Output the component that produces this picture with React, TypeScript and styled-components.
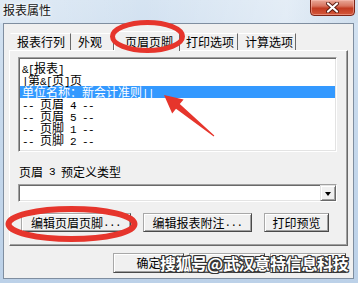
import React from "react";
import styled, { createGlobalStyle } from "styled-components";

const CJK = `"Noto Sans CJK SC", "Noto Sans CJK JP", sans-serif`;

const GlobalStyle = createGlobalStyle`
  html, body { margin: 0; padding: 0; background: #c8d9ec; }
  body { font-family: ${CJK}; }
`;

const Window = styled.div`
  position: relative;
  width: 358px;
  height: 283px;
  box-sizing: border-box;
  display: flex;
  flex-direction: column;
  padding: 0 4px 4px 3px;
  background: linear-gradient(180deg, #d6e4f2 0%, #c8daed 35%, #bcd1e8 100%);
  overflow: hidden;
  font-family: ${CJK};
  color: #000;
`;

const TitleBar = styled.div`
  height: 23px;
  flex-shrink: 0;
  display: flex;
  align-items: flex-start;
  background: linear-gradient(90deg, rgba(255,255,255,0.25), rgba(255,255,255,0) 40%, rgba(255,255,255,0.35) 80%, rgba(200,215,230,0.3));
  margin: 0 -4px 0 -3px;
  padding: 0 4px 0 3px;
`;

const Title = styled.div`
  font-size: 12px;
  line-height: 14px;
  margin-top: 3px;
  color: #151515;
  text-shadow: 0 0 5px #fff, 0 0 3px #fff;
`;

const CloseButton = styled.div`
  margin-left: auto;
  margin-top: -1px;
  margin-right: -1px;
  width: 45px;
  height: 17px;
  box-sizing: border-box;
  border: 1px solid #7d2416;
  border-radius: 0 0 4px 4px;
  background: linear-gradient(180deg, #e9a898 0%, #d8745f 40%, #c23b22 55%, #d4583b 100%);
  box-shadow: inset 0 0 0 1px rgba(255, 200, 190, 0.45);
  display: flex;
  align-items: center;
  justify-content: center;
`;

const Client = styled.div`
  flex: 1;
  display: flex;
  flex-direction: column;
  background: #f0f0f0;
  border: 1px solid #7f8ea0;
  padding: 7px 5px 5px 5px;
`;

const TabStrip = styled.div`
  height: 19px;
  display: flex;
  align-items: flex-end;
  padding-left: 1px;
  position: relative;
  z-index: 1;
`;

const Tab = styled.div<{ $w: number; $pl: number; $active?: boolean }>`
  width: ${(p) => p.$w}px;
  box-sizing: border-box;
  height: ${(p) => (p.$active ? 20 : 17)}px;
  margin-bottom: ${(p) => (p.$active ? -1 : 0)}px;
  padding-left: ${(p) => p.$pl}px;
  padding-bottom: ${(p) => (p.$active ? 2 : 1)}px;
  display: flex;
  align-items: flex-end;
  background: #f0f0f0;
  border-top: 1px solid #ffffff;
  border-left: 1px solid ${(p) => (p.$active ? "#ffffff" : "transparent")};
  border-right: 1px solid #696969;
  font-size: 12px;
  line-height: 14px;
  white-space: nowrap;
`;

const TabPanel = styled.div`
  height: 196px;
  box-sizing: border-box;
  border: 1px solid;
  border-color: #ffffff #696969 #696969 #ffffff;
  box-shadow: inset -1px -1px #a0a0a0;
  padding: 6px 10px 13px 8px;
  display: flex;
  flex-direction: column;
`;

const ListBox = styled.div`
  height: 95px;
  box-sizing: border-box;
  background: #ffffff;
  border: 1px solid;
  border-color: #a0a0a0 #ffffff #ffffff #a0a0a0;
  box-shadow: inset 1px 1px #696969, inset -1px -1px #e3e3e3;
  padding: 4px 1px 0 1px;
  overflow: hidden;
`;

const ListRow = styled.div<{ $selected?: boolean }>`
  height: 12px;
  line-height: 12px;
  display: flex;
  align-items: baseline;
  padding-left: 2px;
  background: ${(p) => (p.$selected ? "#3399ff" : "transparent")};
  color: ${(p) => (p.$selected ? "#ffffff" : "#000000")};
`;

const Narrow = styled.span`
  display: inline-block;
  height: 12px;
  line-height: 12px;
  font-family: "Liberation Mono", "DejaVu Sans Mono", monospace;
  font-size: 11px;
  letter-spacing: -0.6px;
  white-space: pre;
`;

const Wide = styled.span`
  display: inline-block;
  height: 12px;
  line-height: 12px;
  font-family: ${CJK};
  font-size: 12px;
  white-space: pre;
`;

const FieldLabel = styled.div`
  margin-top: 13px;
  height: 14px;
  line-height: 14px;
  padding-left: 1px;
  display: flex;
  align-items: center;
`;

const Combo = styled.div`
  margin-top: 5px;
  height: 18px;
  box-sizing: border-box;
  background: #ffffff;
  border: 1px solid;
  border-color: #a0a0a0 #ffffff #ffffff #a0a0a0;
  box-shadow: inset 1px 1px #696969, inset -1px -1px #e3e3e3;
  display: flex;
  justify-content: flex-end;
`;

const DropButton = styled.div`
  width: 16px;
  height: 16px;
  box-sizing: border-box;
  background: #f0f0f0;
  border: 1px solid;
  border-color: #e3e3e3 #696969 #696969 #e3e3e3;
  box-shadow: inset 1px 1px #ffffff, inset -1px -1px #a0a0a0;
  display: flex;
  align-items: center;
  justify-content: center;
`;

const Arrow = styled.div`
  width: 0;
  height: 0;
  border-left: 3.5px solid transparent;
  border-right: 3.5px solid transparent;
  border-top: 4px solid #000;
  margin-top: 1px;
`;

const ButtonRow = styled.div`
  margin-top: 11px;
  display: flex;
  gap: 12px;
  padding-left: 3px;
`;

const Button = styled.div<{ $w: number; $h?: number }>`
  width: ${(p) => p.$w}px;
  height: ${(p) => p.$h ?? 19}px;
  box-sizing: border-box;
  background: #f0f0f0;
  border: 1px solid;
  border-color: #a8a8a8 #4a4a4a #4a4a4a #a8a8a8;
  box-shadow: inset 1px 1px #ffffff, inset -1px -1px #a0a0a0;
  display: flex;
  align-items: center;
  justify-content: center;
  font-size: 12px;
  line-height: 14px;
  white-space: nowrap;
`;

const BottomRow = styled.div`
  margin-top: 7px;
  display: flex;
  justify-content: flex-end;
  gap: 5px;
  padding-right: 2px;
`;

const Overlay = styled.svg`
  position: absolute;
  left: 0;
  top: 0;
  z-index: 3;
  pointer-events: none;
`;

const Watermark = styled.div`
  position: absolute;
  left: 160px;
  top: 253px;
  z-index: 2;
  height: 20px;
  line-height: 20px;
  font-family: ${CJK};
  font-size: 16px;
  font-weight: 700;
  letter-spacing: -0.3px;
  color: #ffffff;
  white-space: nowrap;
  text-shadow: 1px 0 #333, -1px 0 #333, 0 1px #333, 0 -1px #333, 1px 1px #333, -1px -1px #333, 1px -1px #333, -1px 1px #333;
`;

const isWide = (ch: string) => /[\u2e80-\u9fff\u3000-\u303f\uff00-\uffef]/.test(ch);

function Mixed({ text }: { text: string }) {
  const runs: { wide: boolean; s: string }[] = [];
  for (const ch of text) {
    const w = isWide(ch);
    const last = runs[runs.length - 1];
    if (last && last.wide === w) last.s += ch;
    else runs.push({ wide: w, s: ch });
  }
  return (
    <>
      {runs.map((r, i) => (r.wide ? <Wide key={i}>{r.s}</Wide> : <Narrow key={i}>{r.s}</Narrow>))}
    </>
  );
}

const tabs = [
  { label: "报表行列", w: 61, pl: 6 },
  { label: "外观", w: 43, pl: 6 },
  { label: "页眉页脚", w: 66, pl: 10, active: true },
  { label: "打印选项", w: 58, pl: 5 },
  { label: "计算选项", w: 58, pl: 6 },
];

const rows = [
  "&[报表]",
  "|第&[页]页",
  "单位名称：新会计准则||",
  "-- 页眉 4 --",
  "-- 页眉 5 --",
  "-- 页脚 1 --",
  "-- 页脚 2 --",
];

export default function App() {
  return (
    <>
      <GlobalStyle />
      <Window>
        <TitleBar>
          <Title>报表属性</Title>
          <CloseButton>
            <svg width="13" height="11" viewBox="0 0 13 11">
              <path d="M2 1.5 L11 9.5 M11 1.5 L2 9.5" stroke="#5a1a10" strokeWidth="4" strokeLinecap="round" />
              <path d="M2 1.5 L11 9.5 M11 1.5 L2 9.5" stroke="#ffffff" strokeWidth="2.2" strokeLinecap="round" />
            </svg>
          </CloseButton>
        </TitleBar>
        <Client>
          <TabStrip>
            {tabs.map((t) => (
              <Tab key={t.label} $w={t.w} $pl={t.pl} $active={t.active}>
                {t.label}
              </Tab>
            ))}
          </TabStrip>
          <TabPanel>
            <ListBox>
              {rows.map((r, i) => (
                <ListRow key={i} $selected={i === 2}>
                  <Mixed text={r} />
                </ListRow>
              ))}
            </ListBox>
            <FieldLabel>
              <Mixed text="页眉 3 预定义类型" />
            </FieldLabel>
            <Combo>
              <DropButton>
                <Arrow />
              </DropButton>
            </Combo>
            <ButtonRow>
              <Button $w={110}>
                <Mixed text="编辑页眉页脚..." />
              </Button>
              <Button $w={109}>
                <Mixed text="编辑报表附注..." />
              </Button>
              <Button $w={65}>打印预览</Button>
            </ButtonRow>
          </TabPanel>
          <BottomRow>
            <Button $w={71} $h={20}>确定</Button>
            <Button $w={76} $h={20} />
            <Button $w={76} $h={20} />
          </BottomRow>
        </Client>
        <Watermark>搜狐号@武汉意特信息科技</Watermark>
        <Overlay width="358" height="283" viewBox="0 0 358 283">
          <ellipse cx="147.5" cy="36.5" rx="35" ry="14" fill="none" stroke="#e6352c" strokeWidth="5" />
          <ellipse cx="71.5" cy="224" rx="63" ry="15" fill="none" stroke="#e6352c" strokeWidth="6" />
          <polygon
            points="164,95 183.6,99.4 179.8,104.1 214.3,135.6 213.7,136.4 176,108.7 172.2,113.4"
            fill="#e6352c"
          />
        </Overlay>
      </Window>
    </>
  );
}
